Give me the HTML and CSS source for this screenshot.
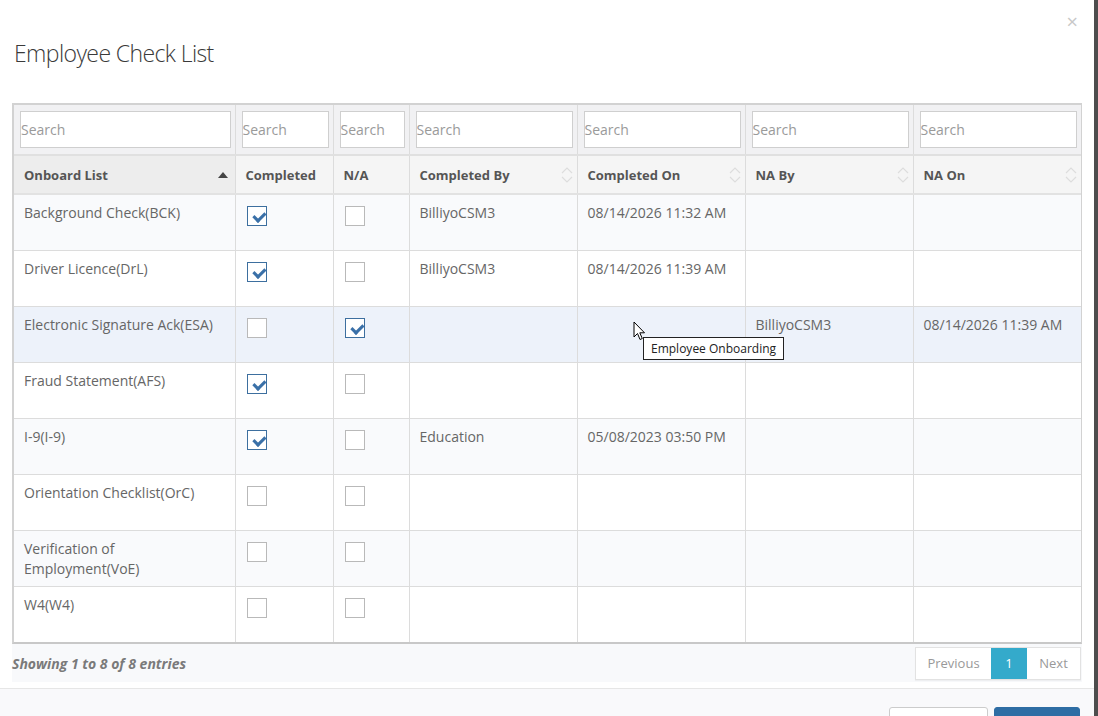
FILE: index.html
```html
<!DOCTYPE html>
<html lang="en">
<head>
  <meta charset="UTF-8">
  <title>Employee Check List</title>
  <link rel="stylesheet" href="styles.css">
</head>
<body>
  <div class="modal">
    <!-- Header -->
    <div class="modal-header">
      <span class="close">&times;</span>
      <h4 class="modal-title">Employee Check List</h4>
    </div>

    <!-- Body -->
    <div class="modal-body">
      <div class="table-wrap">
        <table class="grid">
          <colgroup>
            <col style="width:221px"><col style="width:98px"><col style="width:76px">
            <col style="width:168px"><col style="width:168px"><col style="width:168px"><col style="width:168px">
          </colgroup>
          <thead>
            <tr class="search-row">
              <th><input type="text" placeholder="Search"></th>
              <th><input type="text" placeholder="Search"></th>
              <th><input type="text" placeholder="Search"></th>
              <th><input type="text" placeholder="Search"></th>
              <th><input type="text" placeholder="Search"></th>
              <th><input type="text" placeholder="Search"></th>
              <th><input type="text" placeholder="Search"></th>
            </tr>
            <tr class="head-row">
              <th class="sorted">Onboard List
                <svg class="sort-icon" width="10" height="6" viewBox="0 0 10 6"><path d="M0 6 L5 0 L10 6 Z" fill="#444"/></svg>
              </th>
              <th>Completed</th>
              <th>N/A</th>
              <th>Completed By <svg class="sort-icon both" width="12" height="16" viewBox="0 0 12 16"><path d="M1 6 L6 1 L11 6 M1 10 L6 15 L11 10" fill="none" stroke="#ddd" stroke-width="1.2"/></svg></th>
              <th>Completed On <svg class="sort-icon both" width="12" height="16" viewBox="0 0 12 16"><path d="M1 6 L6 1 L11 6 M1 10 L6 15 L11 10" fill="none" stroke="#ddd" stroke-width="1.2"/></svg></th>
              <th>NA By <svg class="sort-icon both" width="12" height="16" viewBox="0 0 12 16"><path d="M1 6 L6 1 L11 6 M1 10 L6 15 L11 10" fill="none" stroke="#ddd" stroke-width="1.2"/></svg></th>
              <th>NA On <svg class="sort-icon both" width="12" height="16" viewBox="0 0 12 16"><path d="M1 6 L6 1 L11 6 M1 10 L6 15 L11 10" fill="none" stroke="#ddd" stroke-width="1.2"/></svg></th>
            </tr>
          </thead>
          <tbody>
            <tr class="odd">
              <td>Background Check(BCK)</td>
              <td><span class="cb checked"></span></td>
              <td><span class="cb"></span></td>
              <td>BilliyoCSM3</td>
              <td>08/14/2026 11:32 AM</td>
              <td></td>
              <td></td>
            </tr>
            <tr>
              <td>Driver Licence(DrL)</td>
              <td><span class="cb checked"></span></td>
              <td><span class="cb"></span></td>
              <td>BilliyoCSM3</td>
              <td>08/14/2026 11:39 AM</td>
              <td></td>
              <td></td>
            </tr>
            <tr class="odd hover">
              <td>Electronic Signature Ack(ESA)</td>
              <td><span class="cb"></span></td>
              <td><span class="cb checked"></span></td>
              <td></td>
              <td></td>
              <td>BilliyoCSM3</td>
              <td>08/14/2026 11:39 AM</td>
            </tr>
            <tr>
              <td>Fraud Statement(AFS)</td>
              <td><span class="cb checked"></span></td>
              <td><span class="cb"></span></td>
              <td></td>
              <td></td>
              <td></td>
              <td></td>
            </tr>
            <tr class="odd">
              <td>I-9(I-9)</td>
              <td><span class="cb checked"></span></td>
              <td><span class="cb"></span></td>
              <td>Education</td>
              <td>05/08/2023 03:50 PM</td>
              <td></td>
              <td></td>
            </tr>
            <tr>
              <td>Orientation Checklist(OrC)</td>
              <td><span class="cb"></span></td>
              <td><span class="cb"></span></td>
              <td></td>
              <td></td>
              <td></td>
              <td></td>
            </tr>
            <tr class="odd">
              <td>Verification of Employment(VoE)</td>
              <td><span class="cb"></span></td>
              <td><span class="cb"></span></td>
              <td></td>
              <td></td>
              <td></td>
              <td></td>
            </tr>
            <tr>
              <td>W4(W4)</td>
              <td><span class="cb"></span></td>
              <td><span class="cb"></span></td>
              <td></td>
              <td></td>
              <td></td>
              <td></td>
            </tr>
          </tbody>
        </table>
      </div>

      <div class="table-footer">
        <div class="info">Showing 1 to 8 of 8 entries</div>
        <div class="pager">
          <span class="page-btn prev">Previous</span>
          <span class="page-btn active">1</span>
          <span class="page-btn next">Next</span>
        </div>
      </div>
    </div>

    <!-- Footer (buttons cut off by the window edge) -->
    <div class="modal-footer">
      <button class="btn btn-default"></button>
      <button class="btn btn-primary"></button>
    </div>

    <!-- tooltip + cursor -->
    <div class="tooltip">Employee Onboarding</div>
    <svg class="cursor" width="13" height="20" viewBox="0 0 13 20">
      <path d="M1 1 L1 16 L4.5 12.5 L7 18.5 L9.3 17.5 L6.8 11.8 L11.5 11.8 Z" fill="#fff" stroke="#000" stroke-width="1" stroke-linejoin="round"/>
    </svg>
  </div>
</body>
</html>
```

FILE: styles.css
```css
:root {
  --border-color: #dcdcdc;
  --text-color: #666;
  --head-color: #555;
  --stripe-color: #f9fafc;
  --hover-color: #edf2fa;
  --check-color: #3a70a8;
}

body {
  margin: 0;
  background-color: #4d4d4d;
  font-family: 'Open Sans', sans-serif;
  overflow: hidden;
}

.modal {
  position: relative;
  width: 1094px;
  height: 716px;
  background-color: #fff;
  overflow: hidden;
}

.modal-header {
  padding: 36px 14px 0;
  height: 83px;
  box-sizing: border-box;
}

.close {
  float: right;
  margin-top: -24px;
  margin-right: 2px;
  font-size: 20px;
  color: #c8c8c8;
  line-height: 1;
}

.modal-title {
  margin: 0;
  font-size: 23px;
  font-weight: 300;
  color: #3a3a3a;
  line-height: 34px;
  letter-spacing: -0.6px;
}

.modal-body {
  padding: 20px 12px 0;
}

.table-wrap {
  border: 2px solid #d2d2d2;
  border-right-width: 1px;
  border-bottom-color: #c8c8c8;
  width: 1070px;
  box-sizing: border-box;
}

.grid {
  border-collapse: collapse;
  table-layout: fixed;
  width: 100%;
  font-size: 14px;
  color: var(--text-color);
}

.grid th,
.grid td {
  border-left: 1px solid var(--border-color);
  text-align: left;
}

.grid th:first-child,
.grid td:first-child {
  border-left: none;
}

/* Search Row */
.search-row th {
  background-color: #f1f1f3;
  padding: 6px 4px 6px 6px;
  height: 37px;
  border-bottom: 2px solid #e0e0e0;
}

.search-row input {
  width: 100%;
  height: 37px;
  box-sizing: border-box;
  border: 1px solid #cfcfcf;
  padding: 0;
  font-family: 'Open Sans', sans-serif;
  font-size: 14px;
  color: #555;
  outline: none;
}

.search-row input::placeholder {
  color: #9a9a9a;
}

/* Header Row */
.head-row th {
  position: relative;
  background-color: #f5f5f5;
  height: 36px;
  padding: 1px 11px 0 10px;
  font-size: 13px;
  font-weight: bold;
  color: var(--head-color);
  border-bottom: 2px solid #e2e2e2;
}

.head-row th.sorted {
  background-color: #ededed;
}

.sort-icon {
  position: absolute;
  right: 7px;
  top: 16px;
}

.sort-icon.both {
  top: 11px;
  right: 4px;
}

/* Body Rows */
.grid td {
  height: 56px;
  box-sizing: border-box;
  padding: 8px 11px 0 10px;
  vertical-align: top;
  line-height: 20px;
  border-top: 1px solid var(--border-color);
}

.grid tbody tr:first-child td {
  border-top: none;
}

.grid tr.odd td {
  background-color: var(--stripe-color);
}

.grid tr.hover td {
  background-color: var(--hover-color);
}

.cb {
  display: block;
  width: 20px;
  height: 20px;
  margin-top: 3px;
  margin-left: 1px;
  box-sizing: border-box;
  border: 1px solid #b9b9b9;
  background-color: #fff;
  position: relative;
}

.cb.checked {
  border: 1px solid #3d6f9f;
}

.cb.checked::after {
  content: "";
  position: absolute;
  left: 4px;
  top: 2px;
  width: 9px;
  height: 5px;
  border-left: 3px solid var(--check-color);
  border-bottom: 3px solid var(--check-color);
  transform: rotate(-45deg) translate(-1px, 3px);
}

/* Table Footer */
.table-footer {
  display: flex;
  justify-content: space-between;
  align-items: center;
  width: 1070px;
  height: 38px;
  background-color: #f8f9fb;
}

.info {
  font-size: 14px;
  font-weight: bold;
  font-style: italic;
  color: #7a7a7a;
  padding-top: 1px;
}

.pager {
  display: flex;
  margin-right: 1px;
  border: 1px solid #e2e2e2;
  background-color: #fff;
  box-shadow: 0 1px 1px rgba(0, 0, 0, 0.04);
}

.page-btn {
  display: inline-block;
  height: 31px;
  line-height: 31px;
  font-size: 13px;
  color: #999;
  text-align: center;
}

.page-btn.prev {
  width: 75px;
}

.page-btn.next {
  width: 53px;
}

.page-btn.active {
  width: 36px;
  background-color: #34aacb;
  color: #fff;
}

/* Modal Footer */
.modal-footer {
  margin-top: 6px;
  border-top: 1px solid #e6e6e6;
  background-color: #f9f9fb;
  height: 40px;
  padding: 18px 14px 0 0;
  display: flex;
  justify-content: flex-end;
  gap: 6px;
}

.btn {
  height: 34px;
  border-radius: 3px;
  font-family: 'Open Sans', sans-serif;
  font-size: 14px;
}

.btn-default {
  width: 99px;
  background-color: #fff;
  border: 1px solid #ccc;
  color: #333;
}

.btn-primary {
  width: 86px;
  background-color: #2e6da4;
  border: 1px solid #2e6da4;
  color: #fff;
}

/* Tooltip */
.tooltip {
  position: absolute;
  left: 643px;
  top: 337px;
  padding: 3px 7px;
  border: 1px solid #222;
  background-color: #fff;
  font-size: 12px;
  color: #222;
  line-height: 15px;
}

.cursor {
  position: absolute;
  left: 633px;
  top: 321px;
}
```
